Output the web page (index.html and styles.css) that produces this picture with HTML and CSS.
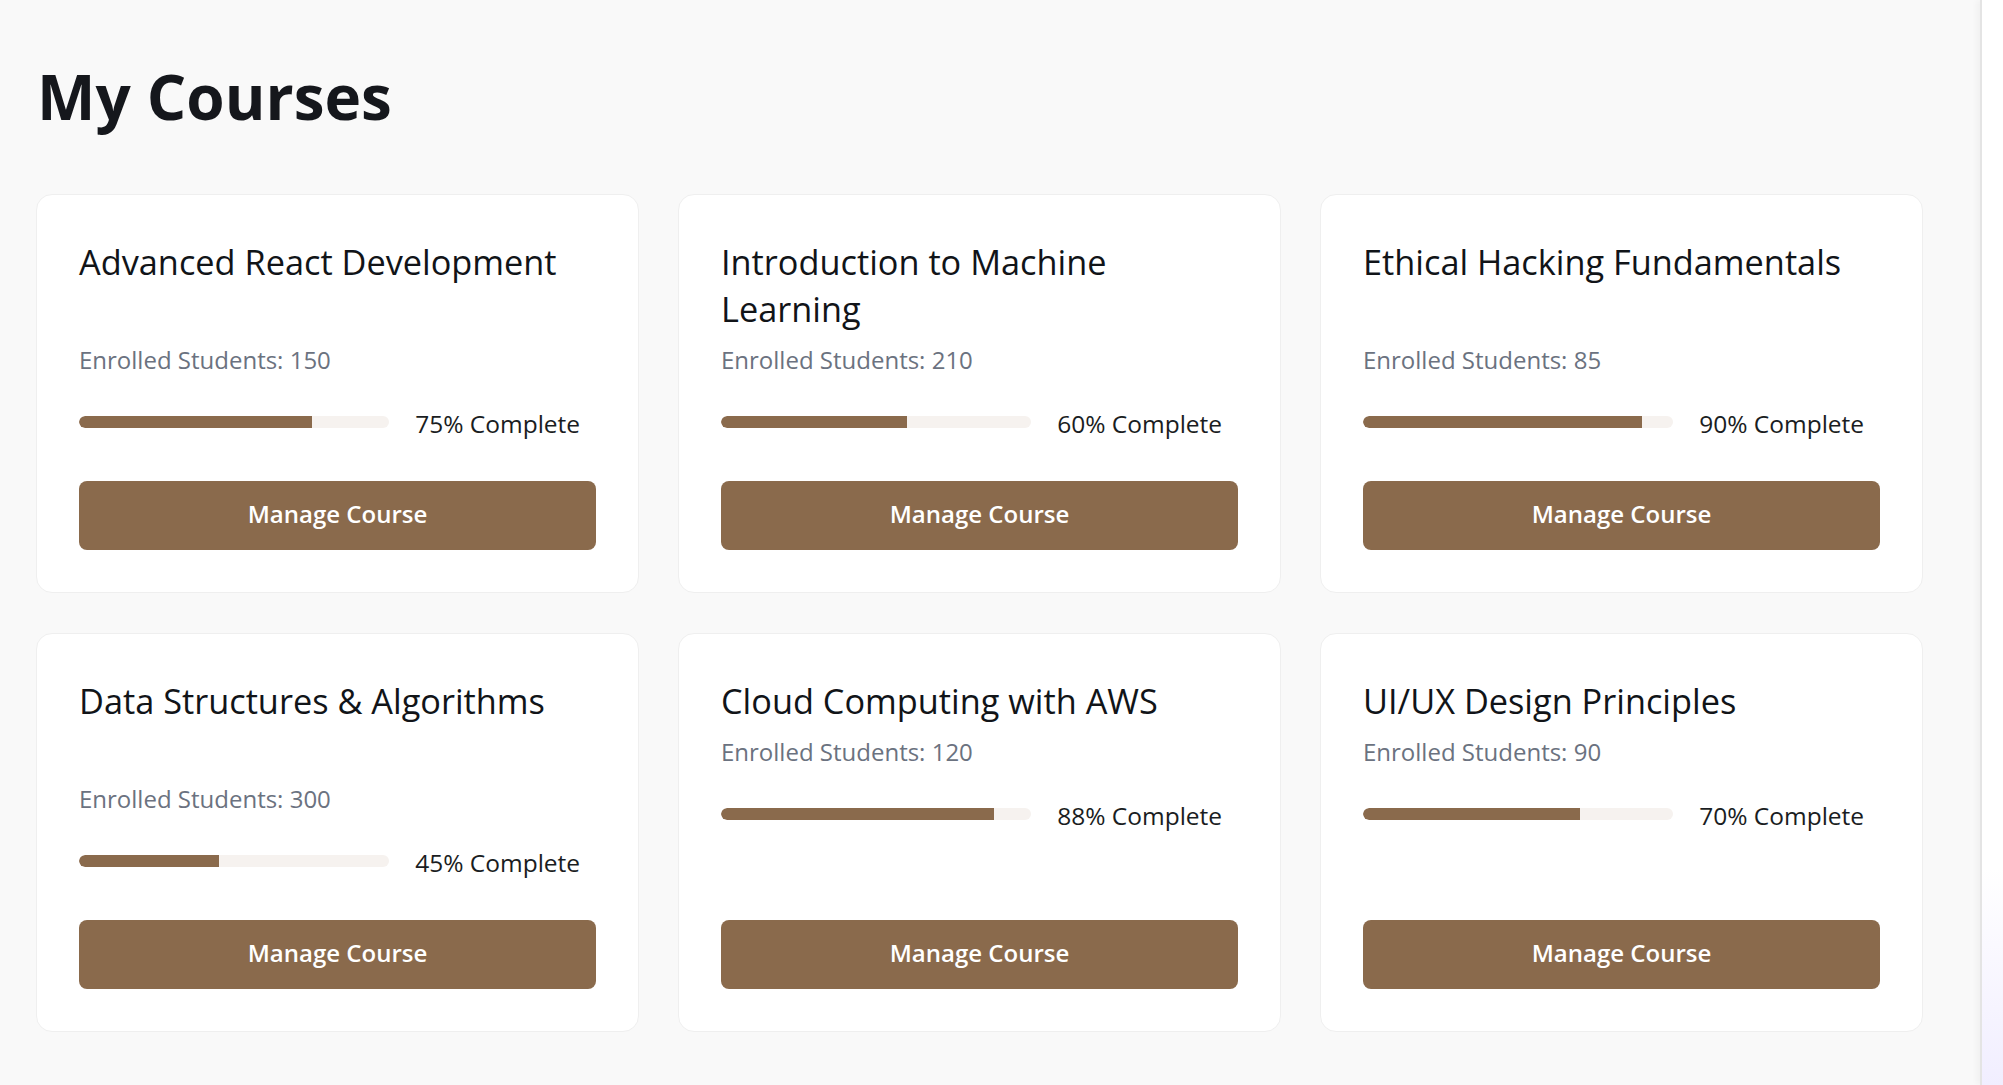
FILE: index.html
```html
<!DOCTYPE html>
<html lang="en">
<head>
<meta charset="utf-8">
<title>My Courses</title>
<link rel="stylesheet" href="styles.css">
</head>
<body>
<div class="layout">
  <main class="main">
    <h1 class="page-title">My Courses</h1>
    <section class="course-grid">
      <article class="course-card">
        <h3 class="course-title course-title--tall">Advanced React Development</h3>
        <p class="course-meta">Enrolled Students: 150</p>
        <div class="progress-row">
          <div class="progress-track"><div class="progress-fill" style="width:75%"></div></div>
          <span class="progress-label">75% Complete</span>
        </div>
        <button class="manage-btn">Manage Course</button>
      </article>
      <article class="course-card">
        <h3 class="course-title course-title--tall">Introduction to Machine Learning</h3>
        <p class="course-meta">Enrolled Students: 210</p>
        <div class="progress-row">
          <div class="progress-track"><div class="progress-fill" style="width:60%"></div></div>
          <span class="progress-label">60% Complete</span>
        </div>
        <button class="manage-btn">Manage Course</button>
      </article>
      <article class="course-card">
        <h3 class="course-title course-title--tall">Ethical Hacking Fundamentals</h3>
        <p class="course-meta">Enrolled Students: 85</p>
        <div class="progress-row">
          <div class="progress-track"><div class="progress-fill" style="width:90%"></div></div>
          <span class="progress-label">90% Complete</span>
        </div>
        <button class="manage-btn">Manage Course</button>
      </article>
      <article class="course-card">
        <h3 class="course-title course-title--tall">Data Structures &amp; Algorithms</h3>
        <p class="course-meta">Enrolled Students: 300</p>
        <div class="progress-row">
          <div class="progress-track"><div class="progress-fill" style="width:45%"></div></div>
          <span class="progress-label">45% Complete</span>
        </div>
        <button class="manage-btn">Manage Course</button>
      </article>
      <article class="course-card">
        <h3 class="course-title">Cloud Computing with AWS</h3>
        <p class="course-meta">Enrolled Students: 120</p>
        <div class="progress-row">
          <div class="progress-track"><div class="progress-fill" style="width:88%"></div></div>
          <span class="progress-label">88% Complete</span>
        </div>
        <button class="manage-btn">Manage Course</button>
      </article>
      <article class="course-card">
        <h3 class="course-title">UI/UX Design Principles</h3>
        <p class="course-meta">Enrolled Students: 90</p>
        <div class="progress-row">
          <div class="progress-track"><div class="progress-fill" style="width:70%"></div></div>
          <span class="progress-label">70% Complete</span>
        </div>
        <button class="manage-btn">Manage Course</button>
      </article>
    </section>
  </main>
  <aside class="side-strip"></aside>
</div>
</body>
</html>
```
FILE: styles.css
```css
* { box-sizing: border-box; }
html, body { margin: 0; padding: 0; height: 100%; }
body {
  font-family: "Open Sans", "Noto Sans", sans-serif;
  background: #f9f9f9;
  color: #111827;
  overflow: hidden;
}
.layout {
  display: flex;
  height: 1085px;
}
.main {
  flex: 1;
  padding: 59px 0 0 36px;
  background: #f9f9f9;
}
.page-title {
  margin: 0 0 61px 1px;
  font-size: 62px;
  line-height: 74px;
  font-weight: 700;
  color: #15171c;
}
.course-grid {
  display: grid;
  grid-template-columns: repeat(3, 603px);
  column-gap: 39px;
  row-gap: 40px;
}
.course-card {
  background: #ffffff;
  border: 1px solid #efefef;
  border-radius: 16px;
  padding: 43px 42px 42px;
  display: flex;
  flex-direction: column;
  min-height: 399px;
}
.course-title {
  margin: 0 0 10px;
  font-size: 34.3px;
  line-height: 47px;
  font-weight: 500;
  color: #111418;
}
.course-title--tall { min-height: 94px; }
.course-meta {
  margin: 0 0 28px;
  font-size: 24px;
  line-height: 36px;
  color: #6b7280;
}
.progress-row {
  display: flex;
  align-items: center;
  gap: 26px;
}
.progress-track {
  width: 60%;
  height: 12px;
  background: #f6f2ef;
  border-radius: 6px;
  overflow: hidden;
  margin-top: -4px;
}
.progress-fill {
  height: 100%;
  background: #8a6a4c;
  border-radius: 6px 0 0 6px;
}
.progress-label {
  font-size: 24.5px;
  line-height: 36px;
  color: #1a1d22;
}
.manage-btn {
  margin-top: auto;
  width: 100%;
  height: 69px;
  padding: 0 0 5px;
  border: none;
  border-radius: 8px;
  background: #8a6a4c;
  color: #ffffff;
  font-family: "Open Sans", "Noto Sans", sans-serif;
  font-size: 24px;
  font-weight: 600;
  cursor: pointer;
}
.side-strip {
  width: 23px;
  flex: none;
  background: linear-gradient(180deg, #ffffff 0%, #ffffff 80%, #f1eeff 100%);
  border-left: 2px solid #e4e4e4;
  box-shadow: -3px 0 6px rgba(0,0,0,0.04);
}
```
